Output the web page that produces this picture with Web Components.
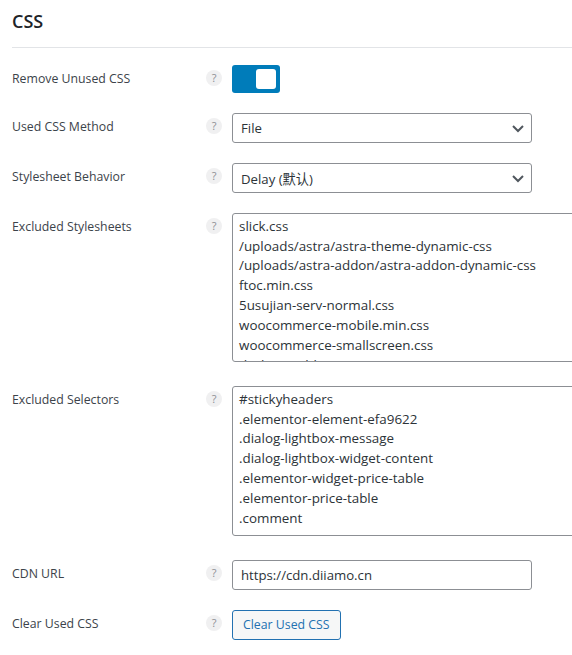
<!DOCTYPE html>
<html>
<head>
<meta charset="utf-8">
<title>CSS</title>
<style>
    html, body { margin: 0; padding: 0; background: #fff; overflow: hidden; }
    body { font-family: "Open Sans", "Noto Sans CJK SC", sans-serif; font-size: 13px; color: #2c3338; }
</style>
</head>
<body>
<settings-panel>
    <setting-row label="Remove Unused CSS"><toggle-switch></toggle-switch></setting-row>
    <setting-row label="Used CSS Method"><select-box value="File"></select-box></setting-row>
    <setting-row label="Stylesheet Behavior"><select-box value="Delay (默认)"></select-box></setting-row>
    <setting-row label="Excluded Stylesheets" class="area"><text-box height="149">slick.css
/uploads/astra/astra-theme-dynamic-css
/uploads/astra-addon/astra-addon-dynamic-css
ftoc.min.css
5usujian-serv-normal.css
woocommerce-mobile.min.css
woocommerce-smallscreen.css
dashicons.bbpress.min.css</text-box></setting-row>
    <setting-row label="Excluded Selectors" class="area"><text-box height="150">#stickyheaders
.elementor-element-efa9622
.dialog-lightbox-message
.dialog-lightbox-widget-content
.elementor-widget-price-table
.elementor-price-table
.comment</text-box></setting-row>
    <setting-row label="CDN URL"><input-box value="https://cdn.diiamo.cn"></input-box></setting-row>
    <setting-row label="Clear Used CSS"><plain-button>Clear Used CSS</plain-button></setting-row>
</settings-panel>
<script>
    window.customElements.define('settings-panel', class extends HTMLElement {
        constructor(){
            super();
            this.attachShadow({mode:'open'}).innerHTML = `
                <style>
                    :host { display: block; padding: 0 0 0 12px; }
                    h2 {
                        margin: 0;
                        padding: 9px 0 13px;
                        height: 25px;
                        line-height: 25px;
                        font-size: 18px;
                        font-weight: 600;
                        color: #1d2327;
                        border-bottom: 1px solid #e2e4e7;
                    }
                    #rows { display: flex; flex-direction: column; gap: 20px; padding-top: 17px; }
                </style>
                <h2>CSS</h2>
                <div id="rows"><slot></slot></div>
            `;
        }
    });

    window.customElements.define('setting-row', class extends HTMLElement {
        constructor(){
            super();
            const label = this.getAttribute('label');
            this.attachShadow({mode:'open'}).innerHTML = `
                <style>
                    :host { display: grid; grid-template-columns: 194px 26px 1fr; align-items: start; }
                    :host(.area) { margin-bottom: 4px; }
                    .label { padding-top: 1px; line-height: 26px; font-size: 12.3px; white-space: nowrap; color: #3c434a; }
                    .help {
                        width: 16px; height: 16px; margin-top: 5px;
                        border-radius: 50%;
                        background: #f0f0f1;
                        color: #8c8f94;
                        font-size: 11px;
                        line-height: 16px;
                        text-align: center;
                    }
                </style>
                <div class="label">${label}</div>
                <div class="help">?</div>
                <div><slot></slot></div>
            `;
        }
    });

    window.customElements.define('toggle-switch', class extends HTMLElement {
        constructor(){
            super();
            this.attachShadow({mode:'open'}).innerHTML = `
                <style>
                    :host { display: block; width: 48px; height: 28px; box-sizing: border-box; padding: 4px; border-radius: 3px; background: #007cba; }
                    div { width: 20px; height: 20px; margin-left: 20px; border-radius: 3px; background: #fff; }
                </style>
                <div></div>
            `;
        }
    });

    window.customElements.define('select-box', class extends HTMLElement {
        constructor(){
            super();
            this.attachShadow({mode:'open'}).innerHTML = `
                <style>
                    :host {
                        display: flex; align-items: center; justify-content: space-between;
                        width: 300px; height: 30px; box-sizing: border-box;
                        padding: 0 6px 0 8px;
                        border: 1px solid #8c8f94; border-radius: 3px;
                        font-size: 13.2px; color: #2c3338; background: #fff;
                    }
                    svg { display: block; }
                </style>
                <span>${this.getAttribute('value')}</span>
                <svg width="14" height="14" viewBox="0 0 14 14"><path d="M2 5 7 10 12 5" fill="none" stroke="#50575e" stroke-width="2"/></svg>
            `;
        }
    });

    window.customElements.define('input-box', class extends HTMLElement {
        constructor(){
            super();
            this.attachShadow({mode:'open'}).innerHTML = `
                <style>
                    :host {
                        display: flex; align-items: center;
                        width: 300px; height: 30px; box-sizing: border-box;
                        padding: 0 8px;
                        border: 1px solid #8c8f94; border-radius: 3px;
                        font-size: 13.2px; color: #2c3338; background: #fff;
                    }
                </style>
                <span>${this.getAttribute('value')}</span>
            `;
        }
    });

    window.customElements.define('text-box', class extends HTMLElement {
        constructor(){
            super();
            const h = this.getAttribute('height');
            this.attachShadow({mode:'open'}).innerHTML = `<style>
                    :host {
                        display: block;
                        width: 400px; height: ${h}px; box-sizing: border-box;
                        padding: 2.7px 6px 0;
                        overflow: hidden;
                        border: 1px solid #8c8f94; border-radius: 3px;
                        font-size: 13.4px; line-height: 19.85px; color: #2c3338; background: #fff;
                        white-space: pre;
                    }
                </style><slot></slot>`;
        }
    });

    window.customElements.define('plain-button', class extends HTMLElement {
        constructor(){
            super();
            this.attachShadow({mode:'open'}).innerHTML = `
                <style>
                    :host {
                        display: inline-block;
                        height: 30px; box-sizing: border-box;
                        padding: 0 10px;
                        line-height: 28px;
                        border: 1px solid #2271b1; border-radius: 3px;
                        font-size: 12.3px; color: #2271b1; background: #f6f7f7;
                    }
                </style>
                <slot></slot>
            `;
        }
    });
</script>
</body>
</html>
